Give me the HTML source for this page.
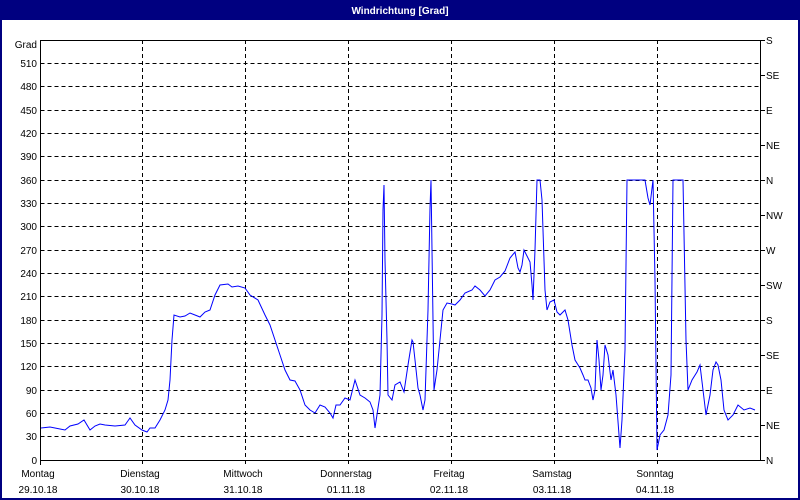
<!DOCTYPE html>
<html><head><meta charset="utf-8"><style>
html,body{margin:0;padding:0;width:800px;height:500px;overflow:hidden;background:#fff}
svg{display:block}
text{font-family:"Liberation Sans",sans-serif;font-size:10px;fill:#000}
</style></head><body>
<svg width="800" height="500" xmlns="http://www.w3.org/2000/svg">
<rect x="0" y="0" width="800" height="500" fill="#000080"/>
<rect x="2" y="20" width="796" height="478" fill="#fff"/>
<text x="400" y="14" text-anchor="middle" style="font-weight:bold;fill:#fff;font-size:10px">Windrichtung [Grad]</text>
<g stroke="#000" stroke-width="1" stroke-dasharray="4,3" fill="none">
<path d="M40.5 63.5H760M40.5 86.5H760M40.5 110.5H760M40.5 133.5H760M40.5 156.5H760M40.5 180.5H760M40.5 203.5H760M40.5 226.5H760M40.5 250.5H760M40.5 273.5H760M40.5 296.5H760M40.5 320.5H760M40.5 343.5H760M40.5 366.5H760M40.5 390.5H760M40.5 413.5H760M40.5 436.5H760"/>
<path d="M142.5 40V465M245.5 40V465M348.5 40V465M451.5 40V465M554.5 40V465M657.5 40V465"/>
</g>
<rect x="40.5" y="40.5" width="720" height="420" fill="none" stroke="#000"/>
<g stroke="#000"><path d="M760 40.5h5M760 75.5h5M760 110.5h5M760 145.5h5M760 180.5h5M760 215.5h5M760 250.5h5M760 285.5h5M760 320.5h5M760 355.5h5M760 390.5h5M760 425.5h5M760 460.5h5M40.5 460v5"/></g>
<g text-anchor="end">
<text x="37" y="48">Grad</text><text x="37" y="67">510</text><text x="37" y="90">480</text><text x="37" y="114">450</text><text x="37" y="137">420</text><text x="37" y="160">390</text><text x="37" y="184">360</text><text x="37" y="207">330</text><text x="37" y="230">300</text><text x="37" y="254">270</text><text x="37" y="277">240</text><text x="37" y="300">210</text><text x="37" y="324">180</text><text x="37" y="347">150</text><text x="37" y="370">120</text><text x="37" y="394">90</text><text x="37" y="417">60</text><text x="37" y="440">30</text><text x="37" y="464">0</text>
</g>
<g>
<text x="766" y="44">S</text><text x="766" y="79">SE</text><text x="766" y="114">E</text><text x="766" y="149">NE</text><text x="766" y="184">N</text><text x="766" y="219">NW</text><text x="766" y="254">W</text><text x="766" y="289">SW</text><text x="766" y="324">S</text><text x="766" y="359">SE</text><text x="766" y="394">E</text><text x="766" y="429">NE</text><text x="766" y="464">N</text>
</g>
<g text-anchor="middle">
<text x="38" y="477">Montag</text><text x="38" y="493">29.10.18</text>
<text x="140" y="477">Dienstag</text><text x="140" y="493">30.10.18</text>
<text x="243" y="477">Mittwoch</text><text x="243" y="493">31.10.18</text>
<text x="346" y="477">Donnerstag</text><text x="346" y="493">01.11.18</text>
<text x="449" y="477">Freitag</text><text x="449" y="493">02.11.18</text>
<text x="552" y="477">Samstag</text><text x="552" y="493">03.11.18</text>
<text x="655" y="477">Sonntag</text><text x="655" y="493">04.11.18</text>
</g>
<polyline fill="none" stroke="#0000ff" stroke-width="1" points="41,428 50,427 60,429 65,430 70,426 78,424 84,420 90,430 95,426 100,424 105,425 115,426 125,425 130,418 135,425 142,430 147,432 150,428 155,428 160,420 165,410 168,400 170,380 172,340 174,315 180,317 185,316 190,313 195,315 200,317 205,312 210,310 215,295 220,285 228,284 232,287 238,286 245,288 250,295 258,300 265,315 270,325 275,340 280,355 285,370 290,380 295,381 300,390 305,405 310,410 315,413 320,405 325,407 330,413 333,418 336,405 340,405 345,398 350,400 355,380 360,395 365,398 370,402 373,410 375,428 378,408 380,395 382,315 383,210 384,185 385,260 387,340 388,395 392,400 395,385 400,382 404,392 408,365 412,340 413,342 415,360 418,388 420,395 423,410 425,400 428,310 430,208 431,180 432,250 434,390 437,370 440,340 443,310 447,303 452,304 455,305 460,300 465,293 472,290 475,286 480,290 485,296 490,290 495,280 500,277 505,271 510,258 515,252 518,268 520,272 522,265 524,250 527,256 530,262 532,285 533,300 535,250 537,180 540,180 542,200 545,290 547,310 550,302 554,300 557,312 560,315 565,310 568,320 572,345 575,360 580,368 583,375 585,380 588,380 591,388 593,400 595,390 597,340 599,360 601,390 603,375 605,345 608,355 611,380 613,370 616,395 620,448 622,420 625,350 627,180 640,180 645,180 648,198 650,205 653,180 655,280 657,450 660,435 664,430 668,415 671,375 673,180 675,180 680,180 683,180 686,340 688,390 692,380 697,372 700,365 703,390 706,415 710,395 713,370 716,362 718,365 721,380 724,410 728,420 733,415 738,405 744,410 750,408 755,410"/>
</svg>
</body></html>
